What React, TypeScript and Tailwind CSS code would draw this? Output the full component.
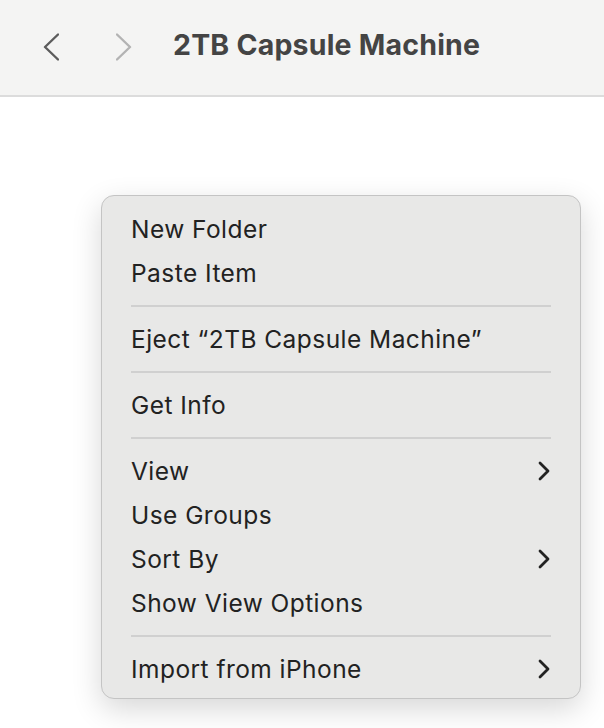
import { ReactNode } from 'react'

type Item = { label: string; submenu?: boolean }

// Menu sections, separated by divider lines
const SECTIONS: Item[][] = [
  [{ label: 'New Folder' }, { label: 'Paste Item' }],
  [{ label: 'Eject \u201c2TB Capsule Machine\u201d' }],
  [{ label: 'Get Info' }],
  [
    { label: 'View', submenu: true },
    { label: 'Use Groups' },
    { label: 'Sort By', submenu: true },
    { label: 'Show View Options' },
  ],
  [{ label: 'Import from iPhone', submenu: true }],
]

function NavChevron({ dir, color }: { dir: 'left' | 'right'; color: string }) {
  const d = dir === 'left' ? 'M15 1.5 L2 14 L15 26.5' : 'M1 1.5 L14 14 L1 26.5'
  return (
    <svg width="16" height="28" viewBox="0 0 16 28" fill="none">
      <path d={d} stroke={color} strokeWidth="2.4" strokeLinecap="round" strokeLinejoin="round" />
    </svg>
  )
}

function SubChevron() {
  return (
    <svg width="12" height="20" viewBox="0 0 12 20" fill="none">
      <path d="M2 2 L10 10 L2 18" stroke="#222" strokeWidth="2.8" strokeLinecap="round" strokeLinejoin="round" />
    </svg>
  )
}

function MenuRow({ children, submenu }: { children: ReactNode; submenu?: boolean }) {
  return (
    <div className="flex h-[44px] items-center justify-between pl-[29px] pr-[30px]">
      <span className="tracking-[0.45px]">{children}</span>
      {submenu && <SubChevron />}
    </div>
  )
}

export default function App() {
  return (
    <div className="h-[728px] w-[604px] overflow-hidden bg-white" style={{ fontFamily: 'Inter, "Noto Sans", sans-serif' }}>
      {/* Toolbar */}
      <div className="flex h-[97px] items-center border-b-2 border-[#dcdcdc] bg-[#f4f4f3] pb-[5px]">
        <div className="ml-[43px] mt-[3px]">
          <NavChevron dir="left" color="#5c5c5c" />
        </div>
        <div className="ml-[57px] mt-[3px]">
          <NavChevron dir="right" color="#b3b3b3" />
        </div>
        <div className="ml-[41px] text-[28.5px] font-bold tracking-[0.2px] text-[#444444]">2TB Capsule Machine</div>
      </div>

      {/* Context menu */}
      <div className="ml-[101px] mt-[98px] w-[480px] rounded-[13px] border border-[#c4c4c4] bg-[#e8e8e7] pb-[7px] pt-[11px] text-[24.5px] text-[#222222] shadow-[0_10px_30px_rgba(0,0,0,0.16)]">
        {SECTIONS.map((section, si) => (
          <div key={si}>
            {si > 0 && (
              <div className="flex h-[22px] items-center px-[29px]">
                <div className="h-[2px] w-full bg-[#d0d0d0]" />
              </div>
            )}
            {section.map((item) => (
              <MenuRow key={item.label} submenu={item.submenu}>
                {item.label}
              </MenuRow>
            ))}
          </div>
        ))}
      </div>
    </div>
  )
}
